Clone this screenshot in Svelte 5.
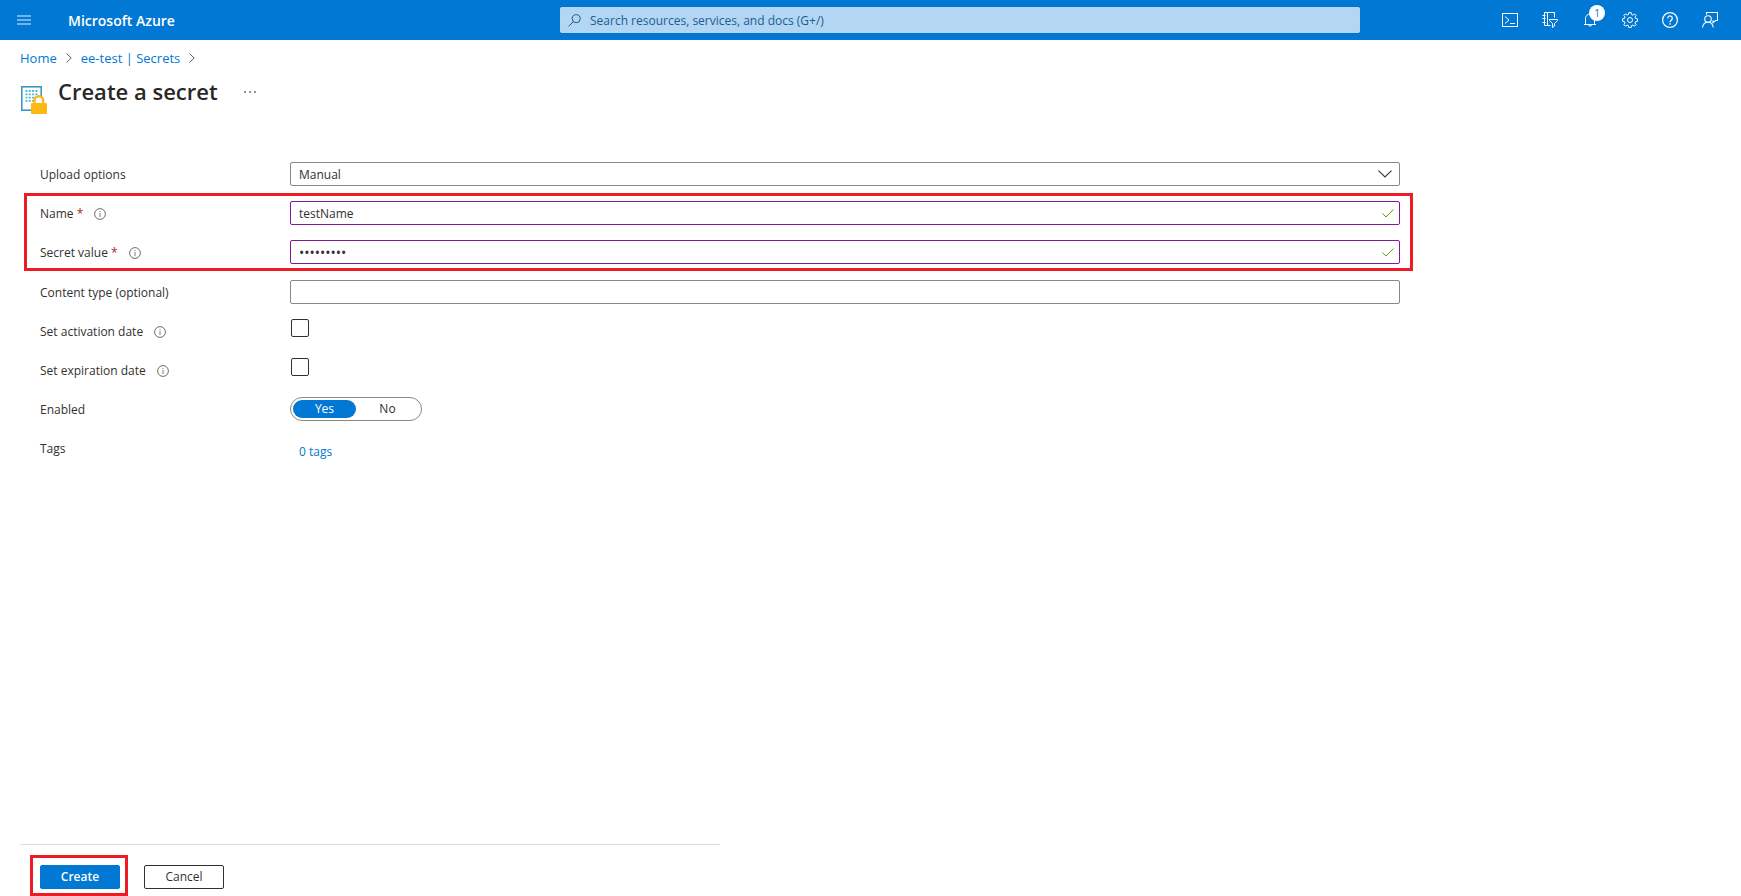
<script>
  let name = 'testName';
  let secret = 'Passw0rd1';
  let contentType = '';
  let activation = false;
  let expiration = false;
  let enabled = 'yes';
</script>

{#snippet info(label)}
  <button type="button" class="info" aria-label={label}>
    <svg width="12" height="12" viewBox="0 0 12 12" fill="none" stroke="currentColor">
      <circle cx="6" cy="6" r="5.4" stroke-width="0.9" />
      <path d="M6 5v4M6 3v1" stroke-width="0.8" />
    </svg>
  </button>
{/snippet}

{#snippet check()}
  <svg class="field-icon valid" width="12" height="9" viewBox="0 0 12 9" fill="none" stroke="currentColor" aria-hidden="true">
    <path d="M0.5 4.5l3.5 3.5 7.5-7.5" />
  </svg>
{/snippet}

<div class="page">
  <header class="topbar">
    <div class="brand-area">
      <button class="menu" aria-label="Show portal menu">
        <svg width="14" height="10" viewBox="0 0 14 10" stroke="currentColor" stroke-width="1.5">
          <path d="M0 1h14M0 5h14M0 9h14" />
        </svg>
      </button>
      <a class="brand" href="#home">Microsoft Azure</a>
    </div>

    <label class="search">
      <svg width="13" height="13" viewBox="0 0 13 13" fill="none" stroke="currentColor" aria-hidden="true">
        <circle cx="8.2" cy="4.7" r="4" />
        <path d="M5.4 7.6L0.6 12.4" />
      </svg>
      <input type="text" aria-label="Search" placeholder="Search resources, services, and docs (G+/)" />
    </label>

    <div class="tools">
      <button aria-label="Cloud Shell">
        <svg width="16" height="16" viewBox="0 0 16 16" fill="none" stroke="currentColor">
          <rect x="0.5" y="1.5" width="15" height="13" />
          <path d="M3 4.5l4 3.5-4 3.5M8 11.5h5" />
        </svg>
      </button>
      <button aria-label="Directories and subscriptions">
        <svg width="16" height="16" viewBox="0 0 16 16" fill="none" stroke="currentColor">
          <path d="M8.5 13.5h-6v-13h10v5M5.5 0.5v13M0.5 3.5h3M0.5 6.5h3M0.5 10.5h3" />
          <path d="M7.5 7.5h8v1l-3 3v2.5l-2 1.5v-4l-3-3z" />
        </svg>
      </button>
      <button aria-label="Notifications">
        <svg width="16" height="16" viewBox="0 0 16 16" fill="none" stroke="currentColor">
          <path d="M2 12.5h12M3.5 12.5V6.5a4.5 4.5 0 0 1 9 0v6M6.5 13a1.7 1.7 0 0 0 3.2 0" />
        </svg>
        <span class="badge">1</span>
      </button>
      <button aria-label="Settings">
        <svg width="16" height="16" viewBox="0 0 16 16" fill="none" stroke="currentColor" stroke-linejoin="round">
          <path d="M6.8 0.6h2.4l.4 2 1.3.5 1.7-1.1 1.5 1.5-1.1 1.7.5 1.300 2 .4v2.400l-2 .4-.5 1.300 1.100 1.700-1.500 1.500-1.700-1.100-1.300.5-.4 2H6.800l-.4-2-1.300-.5-1.700 1.100-1.500-1.500L3 10.900l-.5-1.300-2-.4V6.800l2-.4.5-1.300-1.100-1.700 1.500-1.500 1.700 1.100 1.300-.5z" />
          <circle cx="8" cy="8" r="2.5" />
        </svg>
      </button>
      <button aria-label="Help">
        <svg width="16" height="16" viewBox="0 0 16 16" fill="none" stroke="currentColor">
          <circle cx="8" cy="8" r="7.4" stroke-width="1.2" />
          <path d="M5.7 6.2a2.3 2.3 0 1 1 3.5 2C8.3 8.800 8 9.100 8 10.200M8 11.300v1.400" stroke-width="1.3" />
        </svg>
      </button>
      <button aria-label="Feedback">
        <svg width="16" height="16" viewBox="0 0 16 16" fill="none" stroke="currentColor" stroke-width="1.1">
          <path d="M4.500 2.500v-2h11v8h-2l-2.500 2.200V8.500" />
          <circle cx="6" cy="7" r="3.3" />
          <path d="M0.6 15.5c.3-3.200 2.500-5.200 5.400-5.200s4.900 2 5.200 5.200" />
        </svg>
      </button>
    </div>
  </header>

  <nav class="breadcrumb" aria-label="Breadcrumb">
    <a href="#home">Home</a>
    <svg width="6" height="10" viewBox="0 0 6 10" fill="none" stroke="currentColor"><path d="M0.5 0.5L5.2 5 0.5 9.5" /></svg>
    <a href="#secrets">ee-test | Secrets</a>
    <svg width="6" height="10" viewBox="0 0 6 10" fill="none" stroke="currentColor"><path d="M0.5 0.5L5.2 5 0.5 9.5" /></svg>
  </nav>

  <div class="heading">
    <svg width="26" height="28" viewBox="0 0 26 28" aria-hidden="true">
      <rect x="0.8" y="0.8" width="19.4" height="23.4" fill="#fff" stroke="#3999c6" stroke-width="1.6" />
      <path d="M4.500 5h12M4.500 8.300h12M4.500 11.600h12M4.500 14.900h12" stroke="#59b4d9" stroke-width="1.800" stroke-dasharray="2 1.300" />
      <path d="M13.5 18v-3.500a4.300 4.300 0 0 1 8.600 0V18" fill="#fff" stroke="#fdb913" stroke-width="2.400" />
      <rect x="10" y="17" width="16" height="11" rx="1" fill="#fdb913" />
    </svg>
    <h1>Create a secret</h1>
    <button class="more" aria-label="More actions">
      <svg width="12" height="2" viewBox="0 0 12 2" fill="currentColor">
        <circle cx="1" cy="1" r="0.9" />
        <circle cx="6" cy="1" r="0.9" />
        <circle cx="11" cy="1" r="0.9" />
      </svg>
    </button>
  </div>

  <form id="secret-form" class="form">
    <div class="row">
      <label class="label" for="upload">Upload options</label>
      <div class="field">
        <select id="upload">
          <option>Manual</option>
        </select>
        <svg class="field-icon chevron" width="14" height="8" viewBox="0 0 14 8" fill="none" stroke="currentColor" aria-hidden="true">
          <path d="M0.5 0.7L7 7l6.500-6.300" stroke-width="1.1" />
        </svg>
      </div>
    </div>

    <div class="highlight required-fields">
      <div class="row">
        <div class="label">
          <label for="name">Name <span class="star">*</span></label>
          {@render info('About name')}
        </div>
        <div class="field">
          <input id="name" class="edited" type="text" bind:value={name} />
          {@render check()}
        </div>
      </div>
      <div class="row">
        <div class="label">
          <label for="secret">Secret value <span class="star">*</span></label>
          {@render info('About secret value')}
        </div>
        <div class="field">
          <input id="secret" class="edited" type="password" bind:value={secret} />
          {@render check()}
        </div>
      </div>
    </div>

    <div class="row">
      <label class="label" for="content-type">Content type (optional)</label>
      <div class="field">
        <input id="content-type" type="text" bind:value={contentType} />
      </div>
    </div>
    <div class="row">
      <div class="label">
        <label for="activation">Set activation date</label>
        {@render info('About activation date')}
      </div>
      <input id="activation" type="checkbox" bind:checked={activation} />
    </div>
    <div class="row">
      <div class="label">
        <label for="expiration">Set expiration date</label>
        {@render info('About expiration date')}
      </div>
      <input id="expiration" type="checkbox" bind:checked={expiration} />
    </div>
    <div class="row">
      <span class="label" id="enabled-label">Enabled</span>
      <div class="toggle" role="radiogroup" aria-labelledby="enabled-label">
        <label class:on={enabled === 'yes'}>
          <input type="radio" name="enabled" value="yes" bind:group={enabled} />Yes
        </label>
        <label class:on={enabled === 'no'}>
          <input type="radio" name="enabled" value="no" bind:group={enabled} />No
        </label>
      </div>
    </div>
    <div class="row">
      <span class="label">Tags</span>
      <a class="tags" href="#tags">0 tags</a>
    </div>
  </form>

  <footer>
    <div class="actions">
      <div class="highlight create-box">
        <button class="btn primary" type="submit" form="secret-form">Create</button>
      </div>
      <button class="btn cancel" type="button">Cancel</button>
    </div>
  </footer>
</div>

<style>
  :global(body) {
    background: #fff;
    color: #323130;
    font: 12px/16px "Open Sans", "Noto Sans", sans-serif;
  }

  .page, .page * {
    box-sizing: border-box;
  }

  .page {
    display: flex;
    flex-direction: column;
    min-height: 100vh;
  }

  button, input, select {
    font: inherit;
    color: inherit;
    margin: 0;
  }

  button {
    padding: 0;
    border: 0;
    background: none;
    cursor: pointer;
  }

  svg {
    display: block;
    flex-shrink: 0;
  }

  a {
    color: #0078d4;
    text-decoration: none;
  }

  .topbar {
    display: flex;
    align-items: center;
    height: 40px;
    padding-right: 11px;
    background: #0078d4;
    color: #fff;
  }

  .brand-area {
    display: flex;
    align-items: center;
    flex: 0 1 560px;
  }

  .menu {
    display: grid;
    place-items: center;
    width: 48px;
    height: 40px;
    color: #99c9ee;
  }

  .brand {
    margin-left: 20px;
    padding-top: 2px;
    color: #fff;
    font-size: 14px;
    font-weight: 600;
    white-space: nowrap;
  }

  .search {
    display: flex;
    align-items: center;
    gap: 9px;
    flex: 0 1 800px;
    height: 26px;
    padding: 0 8px;
    border-radius: 2px;
    background: #b3d6f2;
    color: #1d5c94;
  }

  .search input {
    flex: 1;
    min-width: 0;
    padding: 2px 0 0;
    border: 0;
    outline: 0;
    background: none;
  }

  .search input::placeholder {
    color: #1d5c94;
    opacity: 1;
  }

  .tools {
    display: flex;
    margin-left: auto;
  }

  .tools button {
    position: relative;
    display: grid;
    place-items: center;
    width: 40px;
    height: 40px;
  }

  .badge {
    position: absolute;
    top: 5px;
    left: 19px;
    width: 16px;
    height: 16px;
    border-radius: 50%;
    background: #fff;
    color: #0078d4;
    font-size: 10px;
  }

  .breadcrumb {
    display: flex;
    align-items: center;
    gap: 9px;
    padding: 10px 20px 0;
    color: #605e5c;
    font-size: 13px;
  }

  .heading {
    display: flex;
    align-items: flex-end;
    padding: 10px 20px 0 21px;
    height: 48px;
  }

  h1 {
    margin: 0 0 8px 11px;
    font-size: 22px;
    font-weight: 600;
    line-height: 30px;
    color: #292827;
  }

  .more {
    margin: 0 0 13px 26px;
    padding: 8px 0;
    color: #605e5c;
  }

  .form {
    display: flex;
    flex-direction: column;
    gap: 15px;
    max-width: 1400px;
    padding: 48px 0 0 40px;
  }

  .row {
    display: grid;
    grid-template-columns: 250px 1fr;
    align-items: center;
    height: 24px;
  }

  .label {
    display: flex;
    align-items: center;
    gap: 11px;
    padding-top: 2px;
  }

  .star {
    color: #a4262c;
  }

  .info {
    color: #605e5c;
  }

  .highlight {
    border: 3px solid #ed1c24;
  }

  .required-fields {
    display: flex;
    flex-direction: column;
    gap: 15px;
    margin: -8px -13px -6px -16px;
    padding: 5px 10px 4px 13px;
  }

  .field {
    position: relative;
    display: flex;
  }

  .field input, .field select {
    width: 100%;
    height: 24px;
    padding: 0 8px;
    border: 1px solid #8a8886;
    border-radius: 2px;
    background: #fff;
    appearance: none;
    outline: 0;
  }

  .field select {
    padding-top: 1px;
  }

  .field input[type="password"] {
    font-size: 14px;
  }

  .field .edited {
    border-color: #881798;
  }

  .field-icon {
    position: absolute;
    pointer-events: none;
  }

  .chevron {
    top: 8px;
    right: 8px;
  }

  .valid {
    top: 8px;
    right: 6px;
    color: #57a300;
  }

  input[type="checkbox"] {
    align-self: start;
    width: 18px;
    height: 18px;
    margin-left: 1px;
    border: 1px solid #323130;
    border-radius: 2px;
    appearance: none;
  }

  input[type="checkbox"]:checked {
    background: #0078d4;
  }

  .toggle {
    display: grid;
    grid-template-columns: 1fr 1fr;
    width: 132px;
    height: 24px;
    padding: 2px;
    border: 1px solid #8a8886;
    border-radius: 12px;
  }

  .toggle label {
    border-radius: 9px;
    line-height: 18px;
    text-align: center;
  }

  .toggle .on {
    background: #0078d4;
    color: #fff;
  }

  .toggle input {
    position: absolute;
    opacity: 0;
    pointer-events: none;
  }

  .tags {
    padding: 8px 9px 0;
  }

  footer {
    margin-top: auto;
    padding-left: 20px;
  }

  .actions {
    display: flex;
    align-items: flex-end;
    gap: 16px;
    max-width: 700px;
    padding: 10px 0 0 10px;
    border-top: 1px solid #dcdcdc;
  }

  .create-box {
    padding: 7px 5px 4px 7px;
  }

  .btn {
    width: 80px;
    height: 24px;
    border: 1px solid #323130;
    border-radius: 2px;
  }

  .btn.primary {
    display: block;
    border-color: #0078d4;
    background: #0078d4;
    color: #fff;
    font-weight: 600;
  }

  .btn.cancel {
    margin-bottom: 7px;
  }
</style>
